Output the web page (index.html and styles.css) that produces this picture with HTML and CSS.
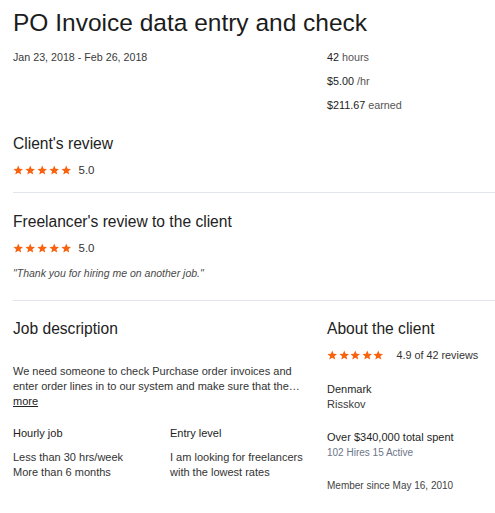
FILE: index.html
```html
<!DOCTYPE html>
<html>
<head>
<meta charset="utf-8">
<link rel="stylesheet" href="styles.css">
</head>
<body>
<svg width="0" height="0" class="defs">
  <defs>
    <symbol id="star" viewBox="0 0 24 24">
      <path d="M12 1L15.06 8.29L22.94 8.95L16.95 14.11L18.76 21.8L12 17.7L5.24 21.8L7.05 14.11L1.06 8.95L8.94 8.29Z"/>
    </symbol>
  </defs>
</svg>
<main class="page">
  <h1 class="title">PO Invoice data entry and check</h1>
  <section class="top">
    <div class="dates">Jan 23, 2018 - Feb 26, 2018</div>
    <div class="stats">
      <div class="stat"><span class="num">42</span> hours</div>
      <div class="stat"><span class="num">$5.00</span> /hr</div>
      <div class="stat"><span class="num">$211.67</span> earned</div>
    </div>
  </section>

  <section class="review first">
    <h2 class="heading">Client's review</h2>
    <div class="rating">
      <span class="stars">
        <svg><use href="#star"/></svg><svg><use href="#star"/></svg><svg><use href="#star"/></svg><svg><use href="#star"/></svg><svg><use href="#star"/></svg>
      </span>
      <span class="score">5.0</span>
    </div>
  </section>

  <section class="review second">
    <h2 class="heading">Freelancer's review to the client</h2>
    <div class="rating">
      <span class="stars">
        <svg><use href="#star"/></svg><svg><use href="#star"/></svg><svg><use href="#star"/></svg><svg><use href="#star"/></svg><svg><use href="#star"/></svg>
      </span>
      <span class="score">5.0</span>
    </div>
    <p class="quote">"Thank you for hiring me on another job."</p>
  </section>

  <section class="bottom">
    <div class="job">
      <h2 class="heading">Job description</h2>
      <p class="desc">We need someone to check Purchase order invoices and enter order lines in to our system and make sure that the…<br><a class="more" href="#">more</a></p>
      <div class="facts">
        <div class="fact">
          <div class="fact-title">Hourly job</div>
          <div class="fact-text">Less than 30 hrs/week<br>More than 6 months</div>
        </div>
        <div class="fact">
          <div class="fact-title">Entry level</div>
          <div class="fact-text">I am looking for freelancers with the lowest rates</div>
        </div>
      </div>
    </div>
    <aside class="client">
      <h2 class="heading">About the client</h2>
      <div class="rating client-rating">
        <span class="stars">
          <svg><use href="#star"/></svg><svg><use href="#star"/></svg><svg><use href="#star"/></svg><svg><use href="#star"/></svg><svg><use href="#star"/></svg>
        </span>
        <span class="score">4.9 of 42 reviews</span>
      </div>
      <div class="block">
        <div class="strong">Denmark</div>
        <div class="plain">Risskov</div>
      </div>
      <div class="block">
        <div class="strong">Over $340,000 total spent</div>
        <div class="muted">102 Hires 15 Active</div>
      </div>
      <div class="member">Member since May 16, 2010</div>
    </aside>
  </section>
</main>
</body>
</html>
```

FILE: styles.css
```css
* { box-sizing: border-box; }
html, body { margin: 0; padding: 0; background: #fff; }
body {
  font-family: "Liberation Sans", Arial, sans-serif;
  color: #2f2f2f;
  font-size: 11px;
  overflow: hidden;
}
.defs { position: absolute; }
.page {
  padding: 8px 0 0 13px;
}
.title {
  margin: 0;
  font-size: 24.5px;
  line-height: 30px;
  font-weight: 400;
  color: #1c1c1c;
  white-space: nowrap;
}
.top {
  display: grid;
  grid-template-columns: 300px 1fr;
  column-gap: 14px;
  margin-top: 7px;
  padding-bottom: 17px;
}
.dates { line-height: 24px; color: #3a3a3a; font-size: 10.7px; }
.stat { line-height: 24px; color: #555; font-size: 10.8px; }
.num { color: #222; }
.heading {
  margin: 0;
  font-size: 15.6px;
  line-height: 20px;
  font-weight: 400;
  color: #222;
  white-space: nowrap;
}
.review { border-bottom: 1px solid #e2e6ea; }
.review.first { padding-bottom: 14px; }
.review.second { padding-top: 19px; padding-bottom: 19px; }
.rating {
  display: flex;
  align-items: center;
  margin-top: 8px;
  line-height: 16px;
  height: 16px;
}
.stars { display: flex; gap: 1.5px; }
.stars svg { width: 10.5px; height: 10.5px; fill: #f9620e; }
.score { margin-left: 7px; font-size: 11.5px; color: #333; }
.quote {
  margin: 9px 0 0;
  line-height: 16px;
  font-style: italic;
  color: #4a4a4a;
  font-size: 10.5px;
}
.bottom {
  display: grid;
  grid-template-columns: 300px 1fr;
  column-gap: 14px;
  padding-top: 18px;
}
.desc {
  margin: 25px 0 0;
  line-height: 15px;
  color: #333;
  width: 290px;
}
.more { color: #222; text-decoration: underline; }
.facts {
  display: grid;
  grid-template-columns: 157px 1fr;
  margin-top: 17px;
}
.fact-title { line-height: 15px; color: #222; }
.fact-text { margin-top: 9px; line-height: 14.5px; color: #333; }
.client-rating { margin-top: 8px; }
.client-rating .stars { gap: 1px; }
.client-rating .stars svg { width: 10.5px; height: 10.5px; }
.client-rating .score { margin-left: 13px; font-size: 10.8px; }
.block { margin-top: 19px; line-height: 15px; }
.block + .block { margin-top: 18px; }
.strong { color: #1f1f1f; }
.plain { color: #3a3a3a; }
.muted { color: #6d7689; font-size: 10px; }
.member { margin-top: 18px; font-size: 10px; line-height: 15px; color: #444; }
```
